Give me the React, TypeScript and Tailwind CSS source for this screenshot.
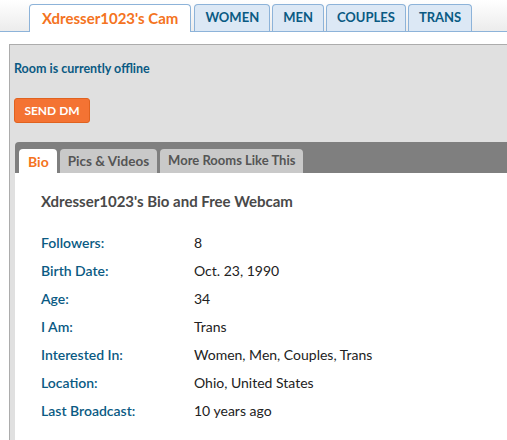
import React from "react";

const topTabs = ["WOMEN", "MEN", "COUPLES", "TRANS"];

const bioRows: [string, string][] = [
  ["Followers:", "8"],
  ["Birth Date:", "Oct. 23, 1990"],
  ["Age:", "34"],
  ["I Am:", "Trans"],
  ["Interested In:", "Women, Men, Couples, Trans"],
  ["Location:", "Ohio, United States"],
  ["Last Broadcast:", "10 years ago"],
];

export default function App() {
  return (
    <div className="w-[507px] h-[440px] overflow-hidden bg-white font-['Lato','Noto_Sans',sans-serif]">
      {/* Section tabs */}
      <div className="flex items-end gap-[2px] h-[32px] pl-[29px] border-b border-[#8db3d9] bg-gradient-to-b from-white to-[#ececec]">
        <div className="h-[28px] -mb-px mr-px px-[12px] flex items-center rounded-t-[4px] border border-b-0 border-[#8db3d9] bg-white text-[15px] font-bold text-[#f47321]">
          Xdresser1023's Cam
        </div>
        {topTabs.map((t) => (
          <div
            key={t}
            className="h-[27px] px-[10px] flex items-center rounded-t-[4px] border border-b-0 border-[#8db3d9] bg-[#dce8f5] text-[13px] font-bold text-[#0a5a83]"
          >
            {t}
          </div>
        ))}
      </div>

      {/* Room panel */}
      <div className="mt-[12px] ml-[9px] h-[400px] border-l border-t border-[#acacac] bg-[#e0e0e0] pl-[4px] pt-[15px]">
        <div className="text-[12.5px] font-bold text-[#0a5a83] leading-[18px]">Room is currently offline</div>

        <button className="mt-[20px] h-[25px] w-[76px] rounded-[3px] border border-[#e0621f] bg-[#f47333] text-[12px] font-bold text-white">
          SEND DM
        </button>

        {/* Room info tabs */}
        <div className="mt-[19px] ml-px flex items-end gap-[3px] h-[31px] pl-[4px] rounded-tl-[4px] bg-[#7f7f7f]">
          <div className="h-[24px] pl-[9px] pr-[8px] flex items-center rounded-t-[4px] bg-white text-[14px] font-bold text-[#f47321]">Bio</div>
          <div className="h-[24px] px-[8px] flex items-center rounded-t-[4px] bg-[#c9c9c9] text-[13.5px] font-bold text-[#555]">Pics &amp; Videos</div>
          <div className="h-[24px] px-[8px] flex items-center rounded-t-[4px] bg-[#c9c9c9] text-[13px] font-bold text-[#555]">More Rooms Like This</div>
        </div>

        <div className="ml-px bg-white h-[300px] pl-[26px] pt-[18px]">
          <div className="text-[15px] font-bold text-[#494949] leading-[20px]">Xdresser1023's Bio and Free Webcam</div>
          <div className="mt-[17px] flex flex-col">
            {bioRows.map(([label, value]) => (
              <div key={label} className="flex h-[28px] items-center text-[14px]">
                <div className="w-[153px] font-semibold text-[#0a5a83]">{label}</div>
                <div className="text-[#222]">{value}</div>
              </div>
            ))}
          </div>
        </div>
      </div>
    </div>
  );
}
